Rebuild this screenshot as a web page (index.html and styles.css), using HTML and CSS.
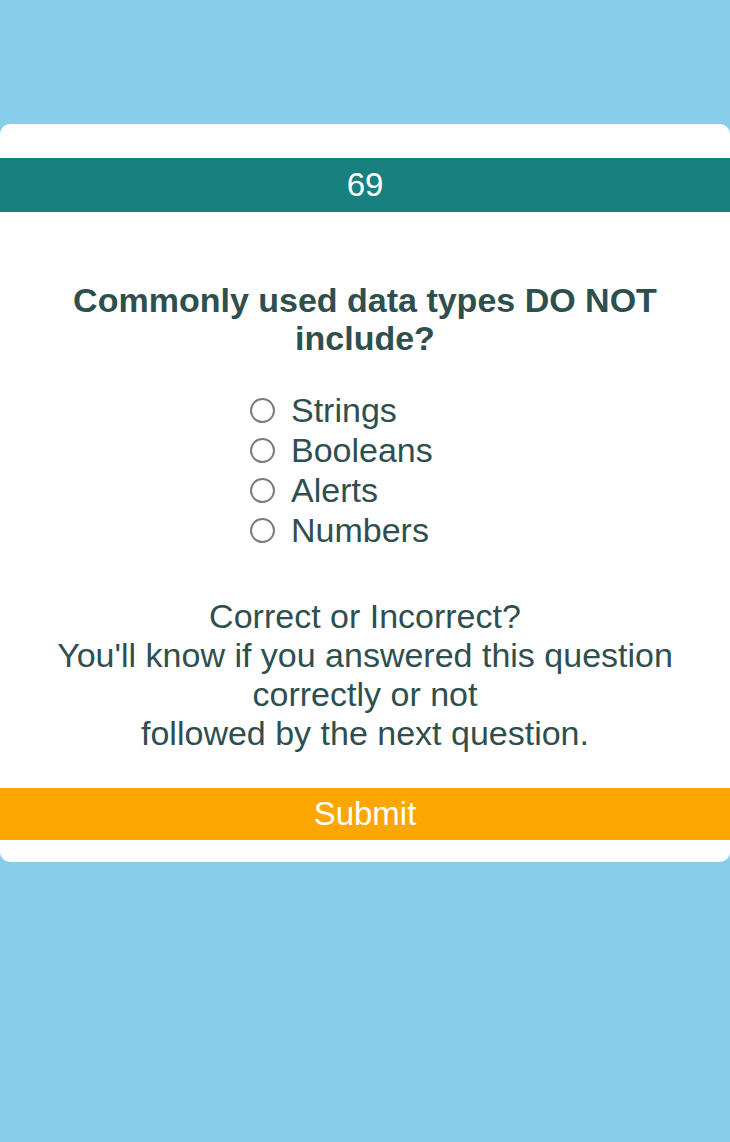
FILE: index.html
```html
<!DOCTYPE html>
<html>
<head>
<meta charset="utf-8">
<link rel="stylesheet" href="styles.css">
</head>
<body>
<main class="card">
  <div class="timer">69</div>
  <h2 class="question">Commonly used data types DO NOT include?</h2>
  <ul class="options">
    <li class="option"><input class="radio" type="radio" name="q"><span>Strings</span></li>
    <li class="option"><input class="radio" type="radio" name="q"><span>Booleans</span></li>
    <li class="option"><input class="radio" type="radio" name="q"><span>Alerts</span></li>
    <li class="option"><input class="radio" type="radio" name="q"><span>Numbers</span></li>
  </ul>
  <p class="feedback">Correct or Incorrect?<br>You'll know if you answered this question correctly or not<br>followed by the next question.</p>
  <button class="submit" type="button">Submit</button>
</main>
</body>
</html>
```
FILE: styles.css
```css
html, body {
  margin: 0;
  padding: 0;
}
body {
  background: #87ceeb;
  font-family: "Liberation Sans", Arial, sans-serif;
  color: #2f4f4f;
  min-height: 1142px;
}
.card {
  margin-top: 124px;
  background: #ffffff;
  border-radius: 10px;
  padding: 34px 0 22px;
  display: flex;
  flex-direction: column;
}
.timer {
  height: 54px;
  line-height: 54px;
  background: #18807f;
  color: #ffffff;
  text-align: center;
  font-size: 33px;
}
.question {
  margin: 69px 60px 0;
  font-size: 34px;
  line-height: 38px;
  font-weight: bold;
  text-align: center;
}
.options {
  list-style: none;
  margin: 33px 0 0;
  padding: 0 0 0 250px;
}
.option {
  display: flex;
  align-items: center;
  height: 40px;
  font-size: 34px;
}
.radio {
  appearance: none;
  -webkit-appearance: none;
  width: 25px;
  height: 25px;
  margin: 0 16px 0 0;
  border: 2px solid #7c7c7c;
  border-radius: 50%;
  background: #fff;
  box-sizing: border-box;
}
.feedback {
  margin: 47px 30px 0;
  font-size: 34px;
  line-height: 39px;
  text-align: center;
}
.submit {
  margin-top: 35px;
  height: 52px;
  border: none;
  padding: 0;
  background: #fca602;
  color: #ffffff;
  font-family: "Liberation Sans", Arial, sans-serif;
  font-size: 33px;
  width: 100%;
}
```
